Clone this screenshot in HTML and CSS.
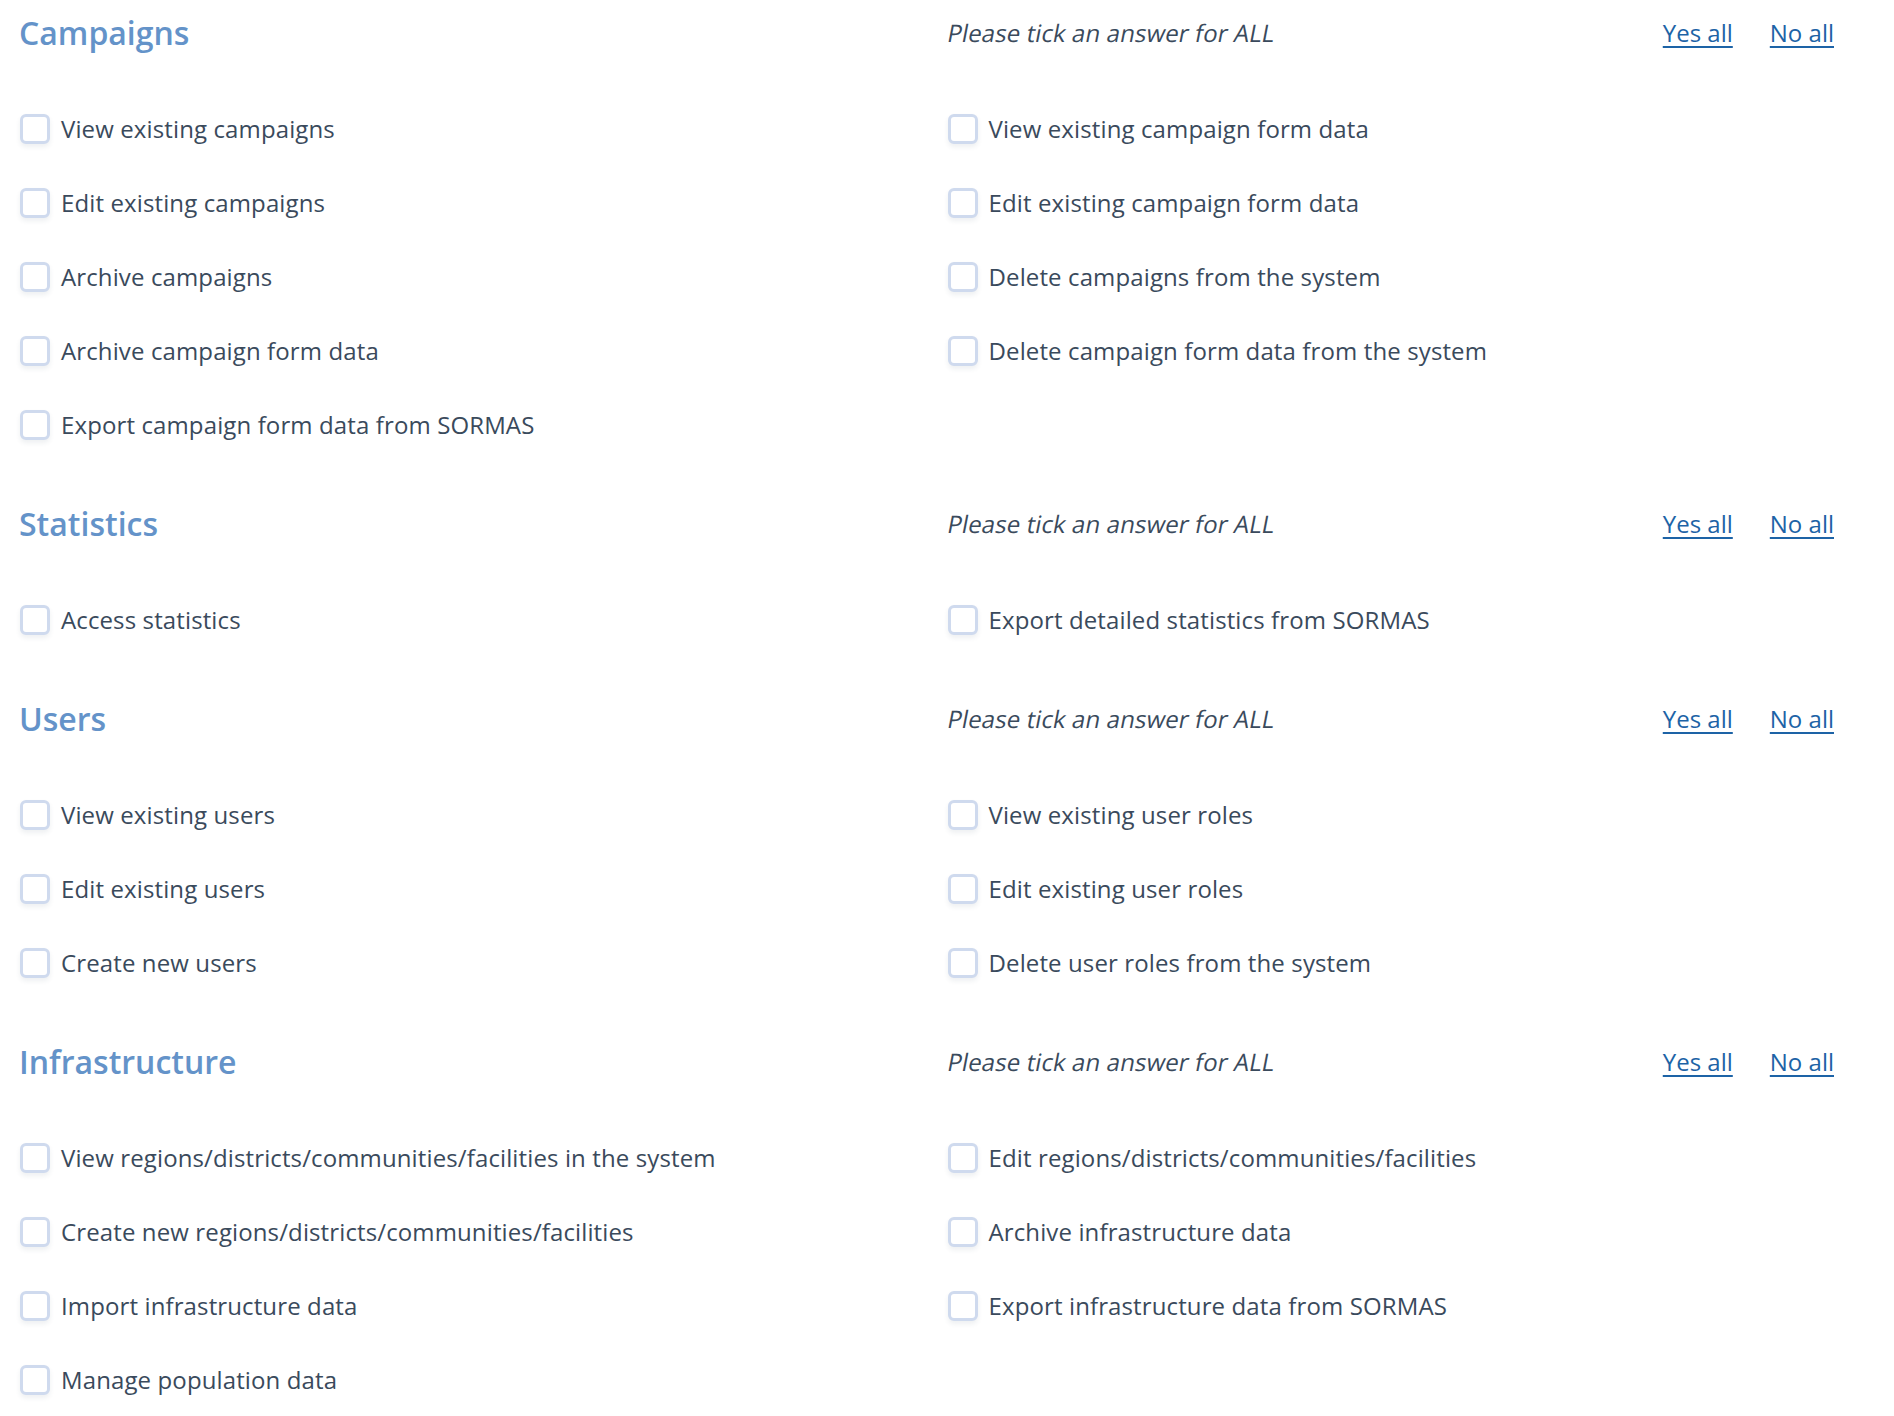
FILE: index.html
```html
<!DOCTYPE html>
<html lang="en">
<head>
<meta charset="utf-8">
<title>User rights</title>
<link rel="stylesheet" href="styles.css">
</head>
<body>
<main class="page">
  <section class="group">
    <div class="group-head">
      <h2 class="group-title">Campaigns</h2>
      <div class="group-tools">
        <span class="hint">Please tick an answer for ALL</span>
        <a class="tool-link" href="#">Yes all</a>
        <a class="tool-link" href="#">No all</a>
      </div>
    </div>
    <div class="options">
      <label class="option"><input type="checkbox" class="box"><span>View existing campaigns</span></label>
      <label class="option"><input type="checkbox" class="box"><span>View existing campaign form data</span></label>
      <label class="option"><input type="checkbox" class="box"><span>Edit existing campaigns</span></label>
      <label class="option"><input type="checkbox" class="box"><span>Edit existing campaign form data</span></label>
      <label class="option"><input type="checkbox" class="box"><span>Archive campaigns</span></label>
      <label class="option"><input type="checkbox" class="box"><span>Delete campaigns from the system</span></label>
      <label class="option"><input type="checkbox" class="box"><span>Archive campaign form data</span></label>
      <label class="option"><input type="checkbox" class="box"><span>Delete campaign form data from the system</span></label>
      <label class="option"><input type="checkbox" class="box"><span>Export campaign form data from SORMAS</span></label>
    </div>
  </section>

  <section class="group">
    <div class="group-head">
      <h2 class="group-title">Statistics</h2>
      <div class="group-tools">
        <span class="hint">Please tick an answer for ALL</span>
        <a class="tool-link" href="#">Yes all</a>
        <a class="tool-link" href="#">No all</a>
      </div>
    </div>
    <div class="options">
      <label class="option"><input type="checkbox" class="box"><span>Access statistics</span></label>
      <label class="option"><input type="checkbox" class="box"><span>Export detailed statistics from SORMAS</span></label>
    </div>
  </section>

  <section class="group">
    <div class="group-head">
      <h2 class="group-title">Users</h2>
      <div class="group-tools">
        <span class="hint">Please tick an answer for ALL</span>
        <a class="tool-link" href="#">Yes all</a>
        <a class="tool-link" href="#">No all</a>
      </div>
    </div>
    <div class="options">
      <label class="option"><input type="checkbox" class="box"><span>View existing users</span></label>
      <label class="option"><input type="checkbox" class="box"><span>View existing user roles</span></label>
      <label class="option"><input type="checkbox" class="box"><span>Edit existing users</span></label>
      <label class="option"><input type="checkbox" class="box"><span>Edit existing user roles</span></label>
      <label class="option"><input type="checkbox" class="box"><span>Create new users</span></label>
      <label class="option"><input type="checkbox" class="box"><span>Delete user roles from the system</span></label>
    </div>
  </section>

  <section class="group">
    <div class="group-head">
      <h2 class="group-title">Infrastructure</h2>
      <div class="group-tools">
        <span class="hint">Please tick an answer for ALL</span>
        <a class="tool-link" href="#">Yes all</a>
        <a class="tool-link" href="#">No all</a>
      </div>
    </div>
    <div class="options">
      <label class="option"><input type="checkbox" class="box"><span>View regions/districts/communities/facilities in the system</span></label>
      <label class="option"><input type="checkbox" class="box"><span>Edit regions/districts/communities/facilities</span></label>
      <label class="option"><input type="checkbox" class="box"><span>Create new regions/districts/communities/facilities</span></label>
      <label class="option"><input type="checkbox" class="box"><span>Archive infrastructure data</span></label>
      <label class="option"><input type="checkbox" class="box"><span>Import infrastructure data</span></label>
      <label class="option"><input type="checkbox" class="box"><span>Export infrastructure data from SORMAS</span></label>
      <label class="option"><input type="checkbox" class="box"><span>Manage population data</span></label>
    </div>
  </section>
</main>
</body>
</html>
```

FILE: styles.css
```css
html, body {
  margin: 0;
  padding: 0;
  background: #ffffff;
}

body {
  font-family: "Open Sans", "Noto Sans", sans-serif;
  font-size: 24px;
  color: #3a4a5c;
}

.page {
  padding: 11px 20px 0 19px;
}

.group + .group {
  margin-top: 40px;
}

.group-head {
  display: grid;
  grid-template-columns: 1fr 1fr;
  align-items: center;
  height: 44px;
}

.group-title {
  margin: 0;
  font-size: 32px;
  line-height: 44px;
  font-weight: 600;
  color: #6493c9;
}

.group-tools {
  display: flex;
  align-items: center;
  line-height: 44px;
  padding-right: 40px;
  padding-left: 1px;
}

.hint {
  display: inline-block;
  font-style: normal;
  transform: skewX(-11deg);
  transform-origin: left center;
  color: #3a4a5c;
  margin-right: auto;
  letter-spacing: 0.1px;
}

.tool-link {
  color: #1d63a6;
  text-decoration: underline;
  text-decoration-thickness: 2px;
  text-underline-offset: 4px;
}

.tool-link + .tool-link {
  margin-left: 37px;
}

.options {
  margin-top: 37px;
  display: grid;
  grid-template-columns: 1fr 1fr;
  grid-auto-rows: 74px;
  align-items: center;
}

.option {
  display: flex;
  align-items: center;
  line-height: 44px;
  letter-spacing: 0.12px;
  cursor: pointer;
}

.box {
  appearance: none;
  -webkit-appearance: none;
  margin: 0 11px 0 1px;
  width: 30px;
  height: 30px;
  box-sizing: border-box;
  border: 3px solid #cfdaee;
  border-radius: 6px;
  background: #ffffff;
  box-shadow: 0 3px 5px rgba(40, 60, 90, 0.08);
  flex: none;
}
```
